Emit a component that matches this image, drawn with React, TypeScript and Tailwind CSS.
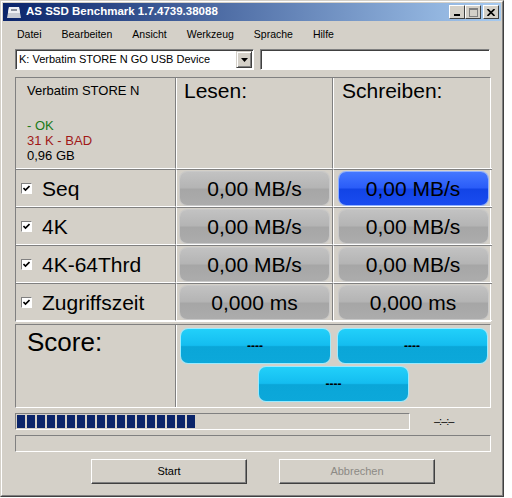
import React from "react";

const tahoma = { fontFamily: '"Liberation Sans", Arial, sans-serif' };

const menus = ["Datei", "Bearbeiten", "Ansicht", "Werkzeug", "Sprache", "Hilfe"];

const rows = [
    { label: "Seq", read: "0,00 MB/s", write: "0,00 MB/s", active: true },
    { label: "4K", read: "0,00 MB/s", write: "0,00 MB/s" },
    { label: "4K-64Thrd", read: "0,00 MB/s", write: "0,00 MB/s" },
    { label: "Zugriffszeit", read: "0,000 ms", write: "0,000 ms" },
];

function Check() {
    return (
        <span className="flex h-[11px] w-[11px] items-center justify-center border border-t-[#808080] border-l-[#808080] border-r-[#ffffff] border-b-[#ffffff] bg-white">
            <svg width="7" height="7" viewBox="0 0 7 7">
                <path d="M0.5 3 L2.5 5 L6.5 1" stroke="#000" strokeWidth="1.6" fill="none" />
            </svg>
        </span>
    );
}

function Pill({ text, active }: { text: string; active?: boolean }) {
    const face = active
        ? "bg-[linear-gradient(#4477ff_0%,#2a5cf8_48%,#1244e6_52%,#1a4cf0_100%)] ring-1 ring-[#8fb0ff]"
        : "bg-[linear-gradient(#c2c2c2_0%,#b4b4b4_48%,#a6a6a6_52%,#acacac_100%)] ring-1 ring-[#c8c8c8]";
    return (
        <div className={`flex h-[33px] w-[149px] items-center justify-center rounded-[7px] text-[21px] leading-none text-black ${face}`}>
            {text}
        </div>
    );
}

function ScorePill() {
    return (
        <div className="flex h-[34px] w-[149px] items-center justify-center rounded-[7px] bg-[linear-gradient(#22d0fa_0%,#14bdf0_48%,#0aa6d8_52%,#0ca8da_100%)] text-[12px] font-bold text-black ring-1 ring-[#9beaff]">
            ----
        </div>
    );
}

function WinButton({ children, disabled }: { children: React.ReactNode; disabled?: boolean }) {
    return (
        <div
            className={`flex h-[25px] w-[156px] items-center justify-center border border-t-white border-l-white border-r-[#404040] border-b-[#404040] bg-[#d4d0c8] text-[11px] shadow-[inset_-1px_-1px_0_#808080] ${disabled ? "text-[#8c8a85]" : "text-black"}`}
        >
            {children}
        </div>
    );
}

export default function App() {
    return (
        <div className="h-[498px] w-[512px] bg-white" style={tahoma}>
            <div className="flex h-[497px] w-[504px] flex-col border border-t-[#d4d0c8] border-l-[#d4d0c8] border-r-[#404040] border-b-[#404040] bg-[#d4d0c8]">
                <div className="flex flex-1 flex-col border border-t-white border-l-white border-r-[#808080] border-b-[#808080] px-[1px] pt-[1px]">
                    {/* title bar */}
                    <div className="flex h-[18px] items-center bg-[linear-gradient(90deg,#0a246a,#a6caf0)] pl-[3px] pr-[2px]">
                        <svg width="16" height="14" viewBox="0 0 16 14">
                            <path d="M3 2 L13 2 L15 13 L1 13 Z" fill="#c8ccd4" />
                            <path d="M3 2 L13 2 L14 8 L2 8 Z" fill="#eef0f4" />
                            <rect x="5" y="4" width="6" height="2" fill="#8a909c" />
                        </svg>
                        <span className="ml-[4px] text-[11.5px] font-bold text-white">AS SSD Benchmark 1.7.4739.38088</span>
                        <div className="ml-auto flex">
                            {["min", "max", "close"].map((k) => (
                                <div
                                    key={k}
                                    className={`flex h-[14px] w-[16px] items-center justify-center border border-t-white border-l-white border-r-[#404040] border-b-[#404040] bg-[#d4d0c8] ${k === "close" ? "ml-[2px]" : ""}`}
                                >
                                    {k === "min" && <span className="mt-[6px] h-[2px] w-[6px] bg-black" />}
                                    {k === "max" && <span className="h-[9px] w-[9px] border border-t-2 border-[#808080]" />}
                                    {k === "close" && (
                                        <svg width="8" height="7" viewBox="0 0 8 7">
                                            <path d="M0.5 0 L7.5 7 M7.5 0 L0.5 7" stroke="#000" strokeWidth="1.6" />
                                        </svg>
                                    )}
                                </div>
                            ))}
                        </div>
                    </div>

                    {/* menu */}
                    <div className="flex h-[23px] items-center gap-[20px] pl-[14px] pt-[4px] text-[10.5px] text-black">
                        {menus.map((m) => (
                            <span key={m}>{m}</span>
                        ))}
                    </div>

                    <div className="flex flex-col pl-[12px] pr-[11px]">
                        {/* drive select */}
                        <div className="mt-[5px] flex h-[21px] gap-[6px]">
                            <div className="flex w-[240px] items-center border border-t-[#808080] border-l-[#808080] border-r-white border-b-white bg-white text-[11px] shadow-[inset_1px_1px_0_#404040]">
                                <span className="ml-[3px] flex-1">K: Verbatim STORE N GO USB Device</span>
                                <div className="mr-[1px] flex h-[17px] w-[16px] items-center justify-center border border-t-[#d4d0c8] border-l-[#d4d0c8] border-r-[#404040] border-b-[#404040] bg-[#d4d0c8] shadow-[inset_1px_1px_0_#fff,inset_-1px_-1px_0_#808080]">
                                    <svg width="7" height="4" viewBox="0 0 7 4">
                                        <path d="M0 0 L7 0 L3.5 4 Z" fill="#000" />
                                    </svg>
                                </div>
                            </div>
                            <div className="w-[230px] border border-t-[#808080] border-l-[#808080] border-r-white border-b-white bg-white shadow-[inset_1px_1px_0_#404040]" />
                        </div>

                        {/* results grid */}
                        <div className="mt-[7px] grid w-[476px] grid-cols-[160px_157px_159px] grid-rows-[91px_38px_38px_38px_38px] border border-t-[#808080] border-l-[#808080] border-r-white border-b-white">
                            <div className="border-r border-b border-r-[#808080] border-b-white pl-[11px] pt-[5px] text-[13px] leading-[15px]">
                                <div>Verbatim STORE N</div>
                                <div className="mt-[20px] text-[#1a7a1a]">- OK</div>
                                <div className="text-[#a01818]">31 K - BAD</div>
                                <div>0,96 GB</div>
                            </div>
                            <div className="border-r border-b border-l border-l-white border-r-[#808080] border-b-white pl-[7px] pt-[2px] text-[21px] leading-none">Lesen:</div>
                            <div className="border-b border-l border-l-white border-b-white pl-[8px] pt-[2px] text-[21px] leading-none">Schreiben:</div>
                            {rows.map((r) => (
                                <React.Fragment key={r.label}>
                                    <div className="flex items-center border-r border-b border-t border-t-[#808080] border-r-[#808080] border-b-white pl-[5px] text-[21px] leading-none">
                                        <Check />
                                        <span className="ml-[10px]">{r.label}</span>
                                    </div>
                                    <div className="flex items-center justify-center border border-l-white border-t-[#808080] border-r-[#808080] border-b-white">
                                        <Pill text={r.read} />
                                    </div>
                                    <div className="flex items-center justify-center border-t border-b border-l border-l-white border-t-[#808080] border-b-white">
                                        <Pill text={r.write} active={r.active} />
                                    </div>
                                </React.Fragment>
                            ))}
                        </div>

                        {/* score */}
                        <div className="mt-[2px] flex h-[84px] w-[476px] border border-t-[#808080] border-l-[#808080] border-r-white border-b-white">
                            <div className="w-[160px] border-r border-r-[#808080] pl-[11px] pt-[4px] text-[26px] leading-none">Score:</div>
                            <div className="flex flex-1 flex-col items-center gap-[4px] border-l border-l-white pt-[4px]">
                                <div className="flex gap-[8px]">
                                    <ScorePill />
                                    <ScorePill />
                                </div>
                                <ScorePill />
                            </div>
                        </div>

                        {/* progress */}
                        <div className="mt-[5px] flex h-[17px] items-center">
                            <div className="flex h-[17px] w-[395px] items-center gap-[2px] border border-t-[#808080] border-l-[#808080] border-r-white border-b-white pl-[1px]">
                                {Array.from({ length: 18 }).map((_, i) => (
                                    <span key={i} className="h-[13px] w-[8px] bg-[#0a246a]" />
                                ))}
                            </div>
                            <span className="ml-[24px] text-[11px] tracking-[-1px]">–:–:–</span>
                        </div>

                        {/* status line */}
                        <div className="mt-[5px] h-[17px] w-[476px] border border-t-[#808080] border-l-[#808080] border-r-white border-b-white" />

                        {/* actions */}
                        <div className="mt-[7px] flex gap-[32px] pl-[76px]">
                            <WinButton>Start</WinButton>
                            <WinButton disabled>Abbrechen</WinButton>
                        </div>
                    </div>
                </div>
            </div>
        </div>
    );
}
